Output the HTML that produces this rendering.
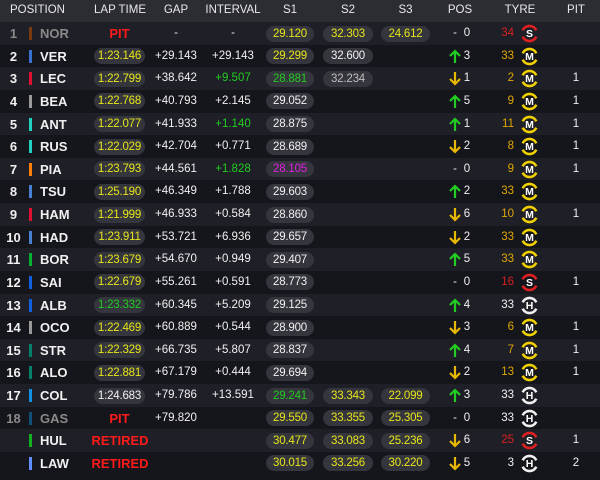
<!DOCTYPE html>
<html><head><meta charset="utf-8"><style>
*{margin:0;padding:0;box-sizing:border-box}
body{width:600px;height:480px;background:#15151c;font-family:"Liberation Sans",sans-serif;color:#f0f0f0;overflow:hidden;position:relative}
.hd{position:absolute;left:0;top:0;width:600px;height:22px;background:#2c2c33;font-size:11.5px;color:#e8e8e8}
.hd span{position:absolute;top:4px;text-align:center;white-space:nowrap}
.r{position:absolute;left:0;width:600px;height:22.63px;font-size:11.5px}
.r:nth-child(odd){background:#1f1f27}
.r:nth-child(even){background:#15151c}
.r>*{position:absolute;top:4px;line-height:15px;text-align:center;white-space:nowrap}
.p{left:0;width:27px;font-weight:bold;font-size:13px}
.bar{left:29px;width:3px;height:13px;top:5px}
.n{left:40px;font-weight:bold;font-size:13px;text-align:left}
.lt,.s1,.s2,.s3{background:#35353d;border-radius:8px;height:16px;top:3.5px;line-height:16px;letter-spacing:-0.2px}
.lt{left:94px;width:51px}
.pt{left:95px;width:49px;color:#ff1a1a;font-weight:bold;font-size:13px}
.rt{left:86px;width:68px;color:#ff1a1a;font-weight:bold;font-size:13px}
.g{left:146px;width:60px}
.i{left:203px;width:60px}
.s1{left:266px;width:48px}
.s2{left:323px;width:50px}
.s3{left:381px;width:49px}
.a{left:448px;width:14px;top:4px}
.pn{left:462px;width:10px}
.tn{left:486px;width:28px;text-align:right}
.ty{left:520px;top:2px;width:19px;height:19px}
.pit{left:560px;width:32px}
.y{color:#e6e619}.gr{color:#22cc22}.pu{color:#e020e0}.dim{color:#8a8a8a}.w2{color:#bdbdbd}
.o{color:#e0a800}.rd{color:#d82020}
</style></head><body>
<div class="hd">
<span style="left:10px;text-align:left">POSITION</span>
<span style="left:90px;width:60px">LAP TIME</span>
<span style="left:146px;width:60px">GAP</span>
<span style="left:203px;width:60px">INTERVAL</span>
<span style="left:266px;width:48px">S1</span>
<span style="left:323px;width:50px">S2</span>
<span style="left:381px;width:49px">S3</span>
<span style="left:440px;width:40px">POS</span>
<span style="left:500px;width:40px">TYRE</span>
<span style="left:560px;width:32px">PIT</span>
</div>
<div id="rows" style="position:absolute;left:0;top:22px;width:600px">
<div class="r" style="top:0px"><span class="p dim">1</span><span class="bar" style="background:#7a3a10"></span><span class="n dim">NOR</span><span class="pt">PIT</span><span class="g">-</span><span class="i">-</span><span class="s1 y">29.120</span><span class="s2 y">32.303</span><span class="s3 y">24.612</span><span class="a">-</span><span class="pn">0</span><span class="tn rd">34</span><svg class="ty" viewBox="-9.5 -9.5 19 19"><path d="M-6.8-3.2A7.5 7.5 0 0 1 6.8-3.2M6.8 3.2A7.5 7.5 0 0 1-6.8 3.2" fill="none" stroke="#e02020" stroke-width="2.6"/><text x="0" y="3.7" text-anchor="middle" font-size="10.5" font-weight="bold" fill="#fff" font-family="Liberation Sans">S</text></svg></div>
<div class="r" style="top:22.63px"><span class="p">2</span><span class="bar" style="background:#3a70d0"></span><span class="n">VER</span><span class="lt y">1:23.146</span><span class="g">+29.143</span><span class="i">+29.143</span><span class="s1 y">29.299</span><span class="s2">32.600</span><svg class="a" width="14" height="15" viewBox="0 0 14 15"><path d="M7 14V2M2 7L7 2 12 7" fill="none" stroke="#22cc22" stroke-width="2.2"/></svg><span class="pn">3</span><span class="tn o">33</span><svg class="ty" viewBox="-9.5 -9.5 19 19"><path d="M-6.8-3.2A7.5 7.5 0 0 1 6.8-3.2M6.8 3.2A7.5 7.5 0 0 1-6.8 3.2" fill="none" stroke="#f0d000" stroke-width="2.6"/><text x="0" y="3.7" text-anchor="middle" font-size="10.5" font-weight="bold" fill="#fff" font-family="Liberation Sans">M</text></svg></div>
<div class="r" style="top:45.26px"><span class="p">3</span><span class="bar" style="background:#e01030"></span><span class="n">LEC</span><span class="lt y">1:22.799</span><span class="g">+38.642</span><span class="i gr">+9.507</span><span class="s1 gr">28.881</span><span class="s2 w2">32.234</span><svg class="a" width="14" height="15" viewBox="0 0 14 15"><path d="M7 1V13M2 8L7 13 12 8" fill="none" stroke="#e8b800" stroke-width="2.2"/></svg><span class="pn">1</span><span class="tn o">2</span><svg class="ty" viewBox="-9.5 -9.5 19 19"><path d="M-6.8-3.2A7.5 7.5 0 0 1 6.8-3.2M6.8 3.2A7.5 7.5 0 0 1-6.8 3.2" fill="none" stroke="#f0d000" stroke-width="2.6"/><text x="0" y="3.7" text-anchor="middle" font-size="10.5" font-weight="bold" fill="#fff" font-family="Liberation Sans">M</text></svg><span class="pit">1</span></div>
<div class="r" style="top:67.89px"><span class="p">4</span><span class="bar" style="background:#9a9a9a"></span><span class="n">BEA</span><span class="lt y">1:22.768</span><span class="g">+40.793</span><span class="i">+2.145</span><span class="s1">29.052</span><svg class="a" width="14" height="15" viewBox="0 0 14 15"><path d="M7 14V2M2 7L7 2 12 7" fill="none" stroke="#22cc22" stroke-width="2.2"/></svg><span class="pn">5</span><span class="tn o">9</span><svg class="ty" viewBox="-9.5 -9.5 19 19"><path d="M-6.8-3.2A7.5 7.5 0 0 1 6.8-3.2M6.8 3.2A7.5 7.5 0 0 1-6.8 3.2" fill="none" stroke="#f0d000" stroke-width="2.6"/><text x="0" y="3.7" text-anchor="middle" font-size="10.5" font-weight="bold" fill="#fff" font-family="Liberation Sans">M</text></svg><span class="pit">1</span></div>
<div class="r" style="top:90.52px"><span class="p">5</span><span class="bar" style="background:#20d0c0"></span><span class="n">ANT</span><span class="lt y">1:22.077</span><span class="g">+41.933</span><span class="i gr">+1.140</span><span class="s1">28.875</span><svg class="a" width="14" height="15" viewBox="0 0 14 15"><path d="M7 14V2M2 7L7 2 12 7" fill="none" stroke="#22cc22" stroke-width="2.2"/></svg><span class="pn">1</span><span class="tn o">11</span><svg class="ty" viewBox="-9.5 -9.5 19 19"><path d="M-6.8-3.2A7.5 7.5 0 0 1 6.8-3.2M6.8 3.2A7.5 7.5 0 0 1-6.8 3.2" fill="none" stroke="#f0d000" stroke-width="2.6"/><text x="0" y="3.7" text-anchor="middle" font-size="10.5" font-weight="bold" fill="#fff" font-family="Liberation Sans">M</text></svg><span class="pit">1</span></div>
<div class="r" style="top:113.15px"><span class="p">6</span><span class="bar" style="background:#20d0c0"></span><span class="n">RUS</span><span class="lt y">1:22.029</span><span class="g">+42.704</span><span class="i">+0.771</span><span class="s1">28.689</span><svg class="a" width="14" height="15" viewBox="0 0 14 15"><path d="M7 1V13M2 8L7 13 12 8" fill="none" stroke="#e8b800" stroke-width="2.2"/></svg><span class="pn">2</span><span class="tn o">8</span><svg class="ty" viewBox="-9.5 -9.5 19 19"><path d="M-6.8-3.2A7.5 7.5 0 0 1 6.8-3.2M6.8 3.2A7.5 7.5 0 0 1-6.8 3.2" fill="none" stroke="#f0d000" stroke-width="2.6"/><text x="0" y="3.7" text-anchor="middle" font-size="10.5" font-weight="bold" fill="#fff" font-family="Liberation Sans">M</text></svg><span class="pit">1</span></div>
<div class="r" style="top:135.78px"><span class="p">7</span><span class="bar" style="background:#ff8000"></span><span class="n">PIA</span><span class="lt y">1:23.793</span><span class="g">+44.561</span><span class="i gr">+1.828</span><span class="s1 pu">28.105</span><span class="a">-</span><span class="pn">0</span><span class="tn o">9</span><svg class="ty" viewBox="-9.5 -9.5 19 19"><path d="M-6.8-3.2A7.5 7.5 0 0 1 6.8-3.2M6.8 3.2A7.5 7.5 0 0 1-6.8 3.2" fill="none" stroke="#f0d000" stroke-width="2.6"/><text x="0" y="3.7" text-anchor="middle" font-size="10.5" font-weight="bold" fill="#fff" font-family="Liberation Sans">M</text></svg><span class="pit">1</span></div>
<div class="r" style="top:158.41px"><span class="p">8</span><span class="bar" style="background:#4a80d0"></span><span class="n">TSU</span><span class="lt y">1:25.190</span><span class="g">+46.349</span><span class="i">+1.788</span><span class="s1">29.603</span><svg class="a" width="14" height="15" viewBox="0 0 14 15"><path d="M7 14V2M2 7L7 2 12 7" fill="none" stroke="#22cc22" stroke-width="2.2"/></svg><span class="pn">2</span><span class="tn o">33</span><svg class="ty" viewBox="-9.5 -9.5 19 19"><path d="M-6.8-3.2A7.5 7.5 0 0 1 6.8-3.2M6.8 3.2A7.5 7.5 0 0 1-6.8 3.2" fill="none" stroke="#f0d000" stroke-width="2.6"/><text x="0" y="3.7" text-anchor="middle" font-size="10.5" font-weight="bold" fill="#fff" font-family="Liberation Sans">M</text></svg></div>
<div class="r" style="top:181.04px"><span class="p">9</span><span class="bar" style="background:#e01030"></span><span class="n">HAM</span><span class="lt y">1:21.999</span><span class="g">+46.933</span><span class="i">+0.584</span><span class="s1">28.860</span><svg class="a" width="14" height="15" viewBox="0 0 14 15"><path d="M7 1V13M2 8L7 13 12 8" fill="none" stroke="#e8b800" stroke-width="2.2"/></svg><span class="pn">6</span><span class="tn o">10</span><svg class="ty" viewBox="-9.5 -9.5 19 19"><path d="M-6.8-3.2A7.5 7.5 0 0 1 6.8-3.2M6.8 3.2A7.5 7.5 0 0 1-6.8 3.2" fill="none" stroke="#f0d000" stroke-width="2.6"/><text x="0" y="3.7" text-anchor="middle" font-size="10.5" font-weight="bold" fill="#fff" font-family="Liberation Sans">M</text></svg><span class="pit">1</span></div>
<div class="r" style="top:203.67px"><span class="p">10</span><span class="bar" style="background:#4a80d0"></span><span class="n">HAD</span><span class="lt y">1:23.911</span><span class="g">+53.721</span><span class="i">+6.936</span><span class="s1">29.657</span><svg class="a" width="14" height="15" viewBox="0 0 14 15"><path d="M7 1V13M2 8L7 13 12 8" fill="none" stroke="#e8b800" stroke-width="2.2"/></svg><span class="pn">2</span><span class="tn o">33</span><svg class="ty" viewBox="-9.5 -9.5 19 19"><path d="M-6.8-3.2A7.5 7.5 0 0 1 6.8-3.2M6.8 3.2A7.5 7.5 0 0 1-6.8 3.2" fill="none" stroke="#f0d000" stroke-width="2.6"/><text x="0" y="3.7" text-anchor="middle" font-size="10.5" font-weight="bold" fill="#fff" font-family="Liberation Sans">M</text></svg></div>
<div class="r" style="top:226.3px"><span class="p">11</span><span class="bar" style="background:#00b030"></span><span class="n">BOR</span><span class="lt y">1:23.679</span><span class="g">+54.670</span><span class="i">+0.949</span><span class="s1">29.407</span><svg class="a" width="14" height="15" viewBox="0 0 14 15"><path d="M7 14V2M2 7L7 2 12 7" fill="none" stroke="#22cc22" stroke-width="2.2"/></svg><span class="pn">5</span><span class="tn o">33</span><svg class="ty" viewBox="-9.5 -9.5 19 19"><path d="M-6.8-3.2A7.5 7.5 0 0 1 6.8-3.2M6.8 3.2A7.5 7.5 0 0 1-6.8 3.2" fill="none" stroke="#f0d000" stroke-width="2.6"/><text x="0" y="3.7" text-anchor="middle" font-size="10.5" font-weight="bold" fill="#fff" font-family="Liberation Sans">M</text></svg></div>
<div class="r" style="top:248.93px"><span class="p">12</span><span class="bar" style="background:#1060e0"></span><span class="n">SAI</span><span class="lt y">1:22.679</span><span class="g">+55.261</span><span class="i">+0.591</span><span class="s1">28.773</span><span class="a">-</span><span class="pn">0</span><span class="tn rd">16</span><svg class="ty" viewBox="-9.5 -9.5 19 19"><path d="M-6.8-3.2A7.5 7.5 0 0 1 6.8-3.2M6.8 3.2A7.5 7.5 0 0 1-6.8 3.2" fill="none" stroke="#e02020" stroke-width="2.6"/><text x="0" y="3.7" text-anchor="middle" font-size="10.5" font-weight="bold" fill="#fff" font-family="Liberation Sans">S</text></svg><span class="pit">1</span></div>
<div class="r" style="top:271.56px"><span class="p">13</span><span class="bar" style="background:#1060e0"></span><span class="n">ALB</span><span class="lt gr">1:23.332</span><span class="g">+60.345</span><span class="i">+5.209</span><span class="s1">29.125</span><svg class="a" width="14" height="15" viewBox="0 0 14 15"><path d="M7 14V2M2 7L7 2 12 7" fill="none" stroke="#22cc22" stroke-width="2.2"/></svg><span class="pn">4</span><span class="tn">33</span><svg class="ty" viewBox="-9.5 -9.5 19 19"><path d="M-6.8-3.2A7.5 7.5 0 0 1 6.8-3.2M6.8 3.2A7.5 7.5 0 0 1-6.8 3.2" fill="none" stroke="#f0f0f0" stroke-width="2.6"/><text x="0" y="3.7" text-anchor="middle" font-size="10.5" font-weight="bold" fill="#fff" font-family="Liberation Sans">H</text></svg></div>
<div class="r" style="top:294.19px"><span class="p">14</span><span class="bar" style="background:#9a9a9a"></span><span class="n">OCO</span><span class="lt y">1:22.469</span><span class="g">+60.889</span><span class="i">+0.544</span><span class="s1">28.900</span><svg class="a" width="14" height="15" viewBox="0 0 14 15"><path d="M7 1V13M2 8L7 13 12 8" fill="none" stroke="#e8b800" stroke-width="2.2"/></svg><span class="pn">3</span><span class="tn o">6</span><svg class="ty" viewBox="-9.5 -9.5 19 19"><path d="M-6.8-3.2A7.5 7.5 0 0 1 6.8-3.2M6.8 3.2A7.5 7.5 0 0 1-6.8 3.2" fill="none" stroke="#f0d000" stroke-width="2.6"/><text x="0" y="3.7" text-anchor="middle" font-size="10.5" font-weight="bold" fill="#fff" font-family="Liberation Sans">M</text></svg><span class="pit">1</span></div>
<div class="r" style="top:316.82px"><span class="p">15</span><span class="bar" style="background:#00806a"></span><span class="n">STR</span><span class="lt y">1:22.329</span><span class="g">+66.735</span><span class="i">+5.807</span><span class="s1">28.837</span><svg class="a" width="14" height="15" viewBox="0 0 14 15"><path d="M7 14V2M2 7L7 2 12 7" fill="none" stroke="#22cc22" stroke-width="2.2"/></svg><span class="pn">4</span><span class="tn o">7</span><svg class="ty" viewBox="-9.5 -9.5 19 19"><path d="M-6.8-3.2A7.5 7.5 0 0 1 6.8-3.2M6.8 3.2A7.5 7.5 0 0 1-6.8 3.2" fill="none" stroke="#f0d000" stroke-width="2.6"/><text x="0" y="3.7" text-anchor="middle" font-size="10.5" font-weight="bold" fill="#fff" font-family="Liberation Sans">M</text></svg><span class="pit">1</span></div>
<div class="r" style="top:339.45px"><span class="p">16</span><span class="bar" style="background:#00806a"></span><span class="n">ALO</span><span class="lt y">1:22.881</span><span class="g">+67.179</span><span class="i">+0.444</span><span class="s1">29.694</span><svg class="a" width="14" height="15" viewBox="0 0 14 15"><path d="M7 1V13M2 8L7 13 12 8" fill="none" stroke="#e8b800" stroke-width="2.2"/></svg><span class="pn">2</span><span class="tn o">13</span><svg class="ty" viewBox="-9.5 -9.5 19 19"><path d="M-6.8-3.2A7.5 7.5 0 0 1 6.8-3.2M6.8 3.2A7.5 7.5 0 0 1-6.8 3.2" fill="none" stroke="#f0d000" stroke-width="2.6"/><text x="0" y="3.7" text-anchor="middle" font-size="10.5" font-weight="bold" fill="#fff" font-family="Liberation Sans">M</text></svg><span class="pit">1</span></div>
<div class="r" style="top:362.08px"><span class="p">17</span><span class="bar" style="background:#1090e0"></span><span class="n">COL</span><span class="lt">1:24.683</span><span class="g">+79.786</span><span class="i">+13.591</span><span class="s1 gr">29.241</span><span class="s2 y">33.343</span><span class="s3 y">22.099</span><svg class="a" width="14" height="15" viewBox="0 0 14 15"><path d="M7 14V2M2 7L7 2 12 7" fill="none" stroke="#22cc22" stroke-width="2.2"/></svg><span class="pn">3</span><span class="tn">33</span><svg class="ty" viewBox="-9.5 -9.5 19 19"><path d="M-6.8-3.2A7.5 7.5 0 0 1 6.8-3.2M6.8 3.2A7.5 7.5 0 0 1-6.8 3.2" fill="none" stroke="#f0f0f0" stroke-width="2.6"/><text x="0" y="3.7" text-anchor="middle" font-size="10.5" font-weight="bold" fill="#fff" font-family="Liberation Sans">H</text></svg></div>
<div class="r" style="top:384.71px"><span class="p dim">18</span><span class="bar" style="background:#105078"></span><span class="n dim">GAS</span><span class="pt">PIT</span><span class="g">+79.820</span><span class="s1 y">29.550</span><span class="s2 y">33.355</span><span class="s3 y">25.305</span><span class="a">-</span><span class="pn">0</span><span class="tn">33</span><svg class="ty" viewBox="-9.5 -9.5 19 19"><path d="M-6.8-3.2A7.5 7.5 0 0 1 6.8-3.2M6.8 3.2A7.5 7.5 0 0 1-6.8 3.2" fill="none" stroke="#f0f0f0" stroke-width="2.6"/><text x="0" y="3.7" text-anchor="middle" font-size="10.5" font-weight="bold" fill="#fff" font-family="Liberation Sans">H</text></svg></div>
<div class="r" style="top:407.34px"><span class="bar" style="background:#10b020"></span><span class="n">HUL</span><span class="rt">RETIRED</span><span class="s1 y">30.477</span><span class="s2 y">33.083</span><span class="s3 y">25.236</span><svg class="a" width="14" height="15" viewBox="0 0 14 15"><path d="M7 1V13M2 8L7 13 12 8" fill="none" stroke="#e8b800" stroke-width="2.2"/></svg><span class="pn">6</span><span class="tn rd">25</span><svg class="ty" viewBox="-9.5 -9.5 19 19"><path d="M-6.8-3.2A7.5 7.5 0 0 1 6.8-3.2M6.8 3.2A7.5 7.5 0 0 1-6.8 3.2" fill="none" stroke="#e02020" stroke-width="2.6"/><text x="0" y="3.7" text-anchor="middle" font-size="10.5" font-weight="bold" fill="#fff" font-family="Liberation Sans">S</text></svg><span class="pit">1</span></div>
<div class="r" style="top:429.97px"><span class="bar" style="background:#6090ff"></span><span class="n">LAW</span><span class="rt">RETIRED</span><span class="s1 y">30.015</span><span class="s2 y">33.256</span><span class="s3 y">30.220</span><svg class="a" width="14" height="15" viewBox="0 0 14 15"><path d="M7 1V13M2 8L7 13 12 8" fill="none" stroke="#e8b800" stroke-width="2.2"/></svg><span class="pn">5</span><span class="tn">3</span><svg class="ty" viewBox="-9.5 -9.5 19 19"><path d="M-6.8-3.2A7.5 7.5 0 0 1 6.8-3.2M6.8 3.2A7.5 7.5 0 0 1-6.8 3.2" fill="none" stroke="#f0f0f0" stroke-width="2.6"/><text x="0" y="3.7" text-anchor="middle" font-size="10.5" font-weight="bold" fill="#fff" font-family="Liberation Sans">H</text></svg><span class="pit">2</span></div>
</div>
</body></html>
